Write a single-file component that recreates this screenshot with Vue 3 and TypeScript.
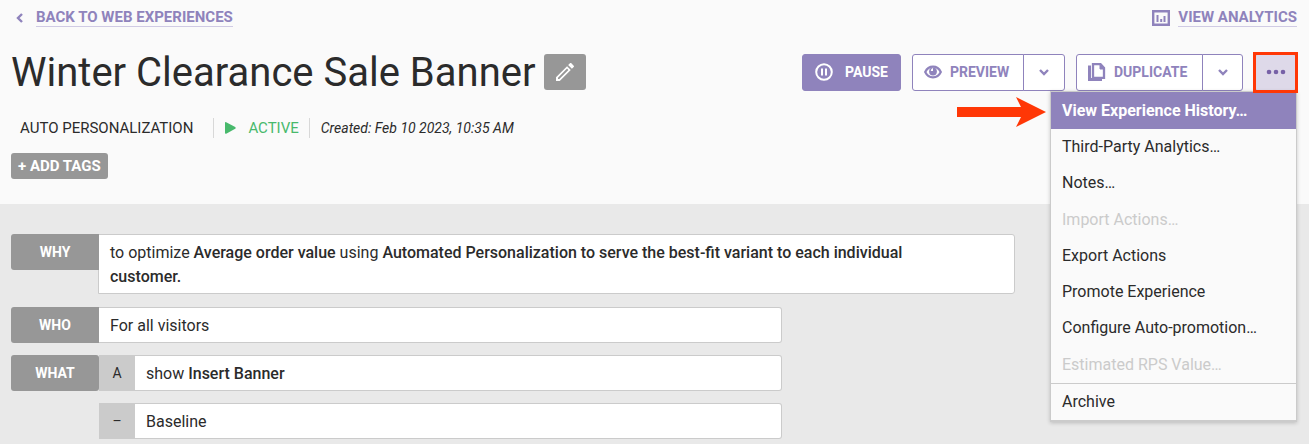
<script setup lang="ts">
interface MenuItem {
  label: string
  state?: 'selected' | 'disabled'
  separated?: boolean
}

const menuItems: MenuItem[] = [
  { label: 'View Experience History…', state: 'selected' },
  { label: 'Third-Party Analytics…' },
  { label: 'Notes…' },
  { label: 'Import Actions…', state: 'disabled' },
  { label: 'Export Actions' },
  { label: 'Promote Experience' },
  { label: 'Configure Auto-promotion…' },
  { label: 'Estimated RPS Value…', state: 'disabled' },
  { label: 'Archive', separated: true },
]
</script>

<template>
  <div class="page">
    <header class="header">
      <nav class="links">
        <a class="link" href="#experiences">
          <svg class="back-icon" width="8" height="10" viewBox="0 0 8 10" fill="none" stroke="currentColor" stroke-width="2.4">
            <path d="M6 1 2 5l4 4" />
          </svg>
          <span class="link-text">BACK TO WEB EXPERIENCES</span>
        </a>
        <a class="link analytics" href="#analytics">
          <svg width="18" height="16" viewBox="0 0 18 16" fill="none" stroke="currentColor">
            <path d="M1.200 1.200h15.600v13.600H1.200z" stroke-width="2.400" />
            <path d="M5.500 5v7M9.200 9v3M12.500 6v6" stroke-width="2" />
          </svg>
          <span class="link-text">VIEW ANALYTICS</span>
        </a>
      </nav>

      <div class="title-row">
        <h1>Winter Clearance Sale Banner</h1>
        <button class="edit" type="button" aria-label="Edit name">
          <svg width="24" height="24" viewBox="0 0 24 24" fill="currentColor">
            <path d="M14.060 8.600l1.300 1.300L6.300 19H5v-1.300l9.060-9.100M17.660 3c-.25 0-.51.1-.7.29l-1.830 1.830 3.750 3.750 1.830-1.830a1 1 0 0 0 0-1.410l-2.340-2.340c-.2-.2-.45-.29-.71-.29zm-3.600 3.190L3 17.250V21h3.750L17.810 9.940l-3.750-3.750z" />
          </svg>
        </button>
        <div class="actions">
          <button class="button primary" type="button">
            <svg width="18" height="18" viewBox="0 0 18 18" fill="none" stroke="currentColor" stroke-width="2">
              <circle cx="9" cy="9" r="7.800" />
              <path d="M7 5.500v7M11 5.500v7" />
            </svg>
            PAUSE
          </button>
          <div class="split preview">
            <button class="button main" type="button">
              <svg width="18" height="14" viewBox="0 0 18 14">
                <path d="M1.200 7C3 3.200 5.800 1.700 9 1.700s6 1.500 7.800 5.300c-1.800 3.800-4.600 5.300-7.800 5.300S3 10.800 1.200 7z" fill="none" stroke="currentColor" stroke-width="2.200" />
                <circle cx="9" cy="6.500" r="3.900" fill="currentColor" />
                <path d="M9 3v3H6.800C6.800 4.500 7.700 3.300 9 3z" fill="#fff" />
              </svg>
              PREVIEW
            </button>
            <button class="button toggle" type="button" aria-label="Preview options">
              <svg width="10" height="7" viewBox="0 0 10 7" fill="none" stroke="currentColor" stroke-width="2.400"><path d="m1 1 4 4 4-4" /></svg>
            </button>
          </div>
          <div class="split duplicate">
            <button class="button main" type="button">
              <svg width="18" height="18" viewBox="0 0 18 18" fill="none" stroke="currentColor" stroke-width="2">
                <path d="M5 1.200h7.500L16 5v9.800H5z" stroke-width="2.300" />
                <path d="M12 1v5h4.500z" fill="currentColor" stroke-width="1" />
                <path d="M1.500 2.500v14H14" stroke-width="3" />
              </svg>
              DUPLICATE
            </button>
            <button class="button toggle" type="button" aria-label="Duplicate options">
              <svg width="10" height="7" viewBox="0 0 10 7" fill="none" stroke="currentColor" stroke-width="2.400"><path d="m1 1 4 4 4-4" /></svg>
            </button>
          </div>
          <div class="more-wrap">
            <button class="button more" type="button" aria-label="More actions" aria-expanded="true">
              <svg width="20" height="6" viewBox="0 0 20 6" fill="currentColor">
                <circle cx="3" cy="3" r="2.300" /><circle cx="10" cy="3" r="2.300" /><circle cx="17" cy="3" r="2.300" />
              </svg>
            </button>
            <span class="highlight"></span>
            <div class="menu" role="menu">
              <button
                v-for="item in menuItems"
                :key="item.label"
                class="menu-item"
                :class="[item.state, { separated: item.separated }]"
                :disabled="item.state === 'disabled'"
                type="button"
                role="menuitem"
              >
                {{ item.label }}
              </button>
              <svg class="arrow" width="90" height="30" viewBox="0 0 90 30">
                <path d="M0 10h64L59 0l30 15-30 15 5-10H0z" fill="#ff3706" />
              </svg>
            </div>
          </div>
        </div>
      </div>

      <div class="meta">
        <span class="kind">AUTO PERSONALIZATION</span>
        <span class="status">
          <svg width="12" height="12" viewBox="0 0 12 12" fill="currentColor"><path d="M0 1q0-1.300 1.200-.7l9 4.700q1 .9 0 1.800l-9 4.900Q0 12 0 11z" /></svg>
          ACTIVE
        </span>
        <span class="created">Created: Feb 10 2023, 10:35 AM</span>
      </div>
      <button class="tags" type="button">+ ADD TAGS</button>
    </header>

    <main class="content">
      <section class="row wide">
        <h2 class="label joined">WHY</h2>
        <p class="box overlap">
          to optimize <strong>Average order value</strong> using
          <strong>Automated Personalization to serve the best-fit variant to each individual customer.</strong>
        </p>
      </section>
      <section class="row">
        <h2 class="label joined">WHO</h2>
        <p class="box">For all visitors</p>
      </section>
      <section class="row">
        <h2 class="label">WHAT</h2>
        <div class="variants">
          <div class="variant">
            <span class="letter">A</span>
            <p class="box">show <strong>Insert Banner</strong></p>
          </div>
          <div class="variant">
            <span class="letter">–</span>
            <p class="box">Baseline</p>
          </div>
        </div>
      </section>
    </main>
  </div>
</template>

<style>
body {
  margin: 0;
}
</style>

<style scoped>
.page {
  display: flex;
  flex-direction: column;
  box-sizing: border-box;
  min-height: 100vh;
  background: #e9e9e9;
  color: #2b2b2b;
  font: 16px/24px Roboto, "Liberation Sans", sans-serif;
}
.page * {
  box-sizing: border-box;
}
svg {
  flex: none;
}
button {
  font: inherit;
  cursor: pointer;
}
.header {
  padding: 8px 12px 25px 11px;
  background: #fafafa;
}
.links {
  display: flex;
  justify-content: space-between;
}
.link {
  display: flex;
  align-items: center;
  color: #8f83bc;
  font-size: 15px;
  font-weight: 700;
  line-height: 18px;
  text-decoration: none;
}
.link-text {
  border-bottom: 1px solid #d0cbe4;
}
.back-icon {
  margin: 0 12px 0 5px;
}
.analytics {
  gap: 8px;
}
.title-row {
  display: flex;
  align-items: center;
  margin-top: 20px;
}
h1 {
  margin: 0;
  padding-top: 2px;
  font-size: 40px;
  font-weight: 400;
  line-height: 48px;
}
.edit {
  display: flex;
  align-items: center;
  justify-content: center;
  width: 42px;
  height: 36px;
  margin-left: 8px;
  padding: 0;
  border: 0;
  border-radius: 3px;
  background: #979797;
  color: #fff;
}
.actions {
  display: flex;
  gap: 11px;
  margin-left: auto;
}
.button {
  display: flex;
  align-items: center;
  justify-content: center;
  height: 37px;
  padding: 0;
  border: 1px solid #8f83bc;
  border-radius: 3px;
  background: #fff;
  color: #8f83bc;
  font-size: 14px;
  font-weight: 700;
}
.primary {
  gap: 12px;
  width: 99px;
  background: #8f83bc;
  color: #fff;
}
.split {
  display: flex;
}
.preview {
  width: 153px;
}
.duplicate {
  width: 167px;
}
.main {
  flex: 1;
  gap: 8px;
  justify-content: flex-start;
  padding-left: 11px;
  border-radius: 3px 0 0 3px;
}
.toggle {
  width: 42px;
  margin-left: -1px;
  border-radius: 0 3px 3px 0;
}
.duplicate .toggle {
  width: 41px;
}
.more-wrap {
  position: relative;
}
.more {
  width: 43px;
  background: #ded9e9;
  color: #7761a7;
}
.highlight {
  position: absolute;
  z-index: 2;
  inset: -2px -1px;
  border: 3px solid #ff3706;
  pointer-events: none;
}
.menu {
  position: absolute;
  z-index: 1;
  top: 100%;
  right: 0;
  width: 247px;
  border: 1px solid #cbcbcb;
  border-bottom-width: 2px;
  background: #fafafa;
  box-shadow: 0 1px 4px rgba(0, 0, 0, 0.2);
}
.menu-item {
  display: block;
  width: 100%;
  height: 36px;
  padding: 0 11px;
  border: 0;
  background: none;
  color: #2b2b2b;
  text-align: left;
}
.menu-item.selected {
  height: 37px;
  padding-top: 1px;
  background: #8f83bc;
  color: #fff;
  font-weight: 700;
}
.menu-item.disabled {
  height: 37px;
  padding-top: 1px;
  color: #cbcbcb;
}
.menu-item.separated {
  height: 37px;
  border-top: 1px solid #cbcbcb;
}
.arrow {
  position: absolute;
  top: 5px;
  right: 100%;
  margin-right: 4px;
}
.meta {
  display: flex;
  align-items: center;
  margin-top: 21px;
  padding-left: 9px;
  font-size: 14px;
  line-height: 20px;
}
.kind,
.status {
  border-right: 1px solid #d8d8d8;
}
.kind {
  padding-right: 20px;
  font-size: 15px;
}
.status {
  display: flex;
  align-items: center;
  gap: 11px;
  padding: 0 10px 0 11px;
  color: #48b96c;
  font-size: 15px;
}
.created {
  padding-left: 11px;
  font-style: italic;
}
.tags {
  display: block;
  height: 26px;
  margin-top: 15px;
  padding: 0 7px;
  border: 0;
  border-radius: 3px;
  background: #979797;
  color: #fff;
  font-size: 15px;
  font-weight: 700;
}
.content {
  display: flex;
  flex: 1;
  flex-direction: column;
  gap: 12px;
  padding: 30px 12px 4px 11px;
}
.row {
  display: flex;
  align-items: flex-start;
  max-width: 771px;
}
.wide {
  max-width: 1004px;
  margin-bottom: 1px;
}
.label {
  position: relative;
  flex: none;
  width: 88px;
  margin: 0;
  border-radius: 3px;
  background: #979797;
  color: #fff;
  font-size: 14px;
  font-weight: 700;
  line-height: 36px;
  text-align: center;
}
.joined {
  border-radius: 3px 0 0 3px;
}
.box {
  flex: 1;
  margin: 0;
  padding: 6px 11px 4px;
  border: 1px solid #cbcbcb;
  border-left: 0;
  border-radius: 0 3px 3px 0;
  background: #fff;
}
.box.overlap {
  margin-left: -1px;
  padding-right: 80px;
  border-left: 1px solid #cbcbcb;
}
strong {
  font-weight: 500;
}
.variants {
  display: flex;
  flex: 1;
  flex-direction: column;
  gap: 12px;
}
.variant {
  display: flex;
}
.letter {
  width: 36px;
  background: #cbcbcb;
  font-size: 14px;
  line-height: 36px;
  text-align: center;
}
</style>
